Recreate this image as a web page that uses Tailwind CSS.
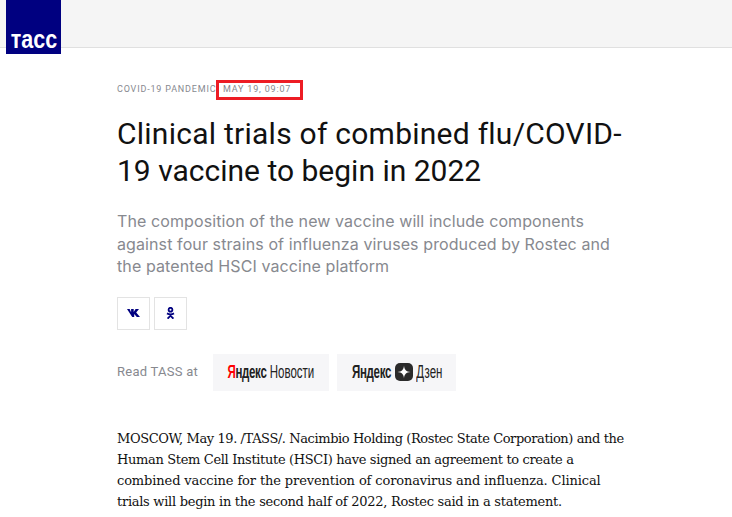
<!DOCTYPE html>
<html lang="en">
<head>
  <meta charset="UTF-8" />
  <title>TASS</title>
  <script src="https://cdn.jsdelivr.net/npm/@tailwindcss/browser@4"></script>
</head>
<body class="h-[517px] w-[732px] overflow-hidden bg-white font-['Roboto',sans-serif]">
  <!-- header -->
  <header class="relative h-[48px] bg-[#f5f5f5] border-b border-[#e0e0e0]">
    <div class="absolute left-[6px] top-0 w-[55px] h-[54px] bg-[#000080] flex items-end justify-center pb-[2px]">
      <span class="text-white font-bold text-[25px] leading-[26px] scale-x-[0.86] font-['Liberation_Sans',sans-serif]">тасс</span>
    </div>
  </header>

  <main class="pl-[117px] w-[660px]">
    <!-- meta -->
    <div class="flex items-center mt-[32px] h-[20px] text-[9px] tracking-[0.82px] text-[#87898f]">
      <span class="whitespace-nowrap w-[99px]">COVID-19 PANDEMIC</span>
      <span class="h-[20px] w-[87px] border-[3px] border-[#ed1c24] flex items-center pl-[4px] whitespace-nowrap">MAY 19, 09:07</span>
    </div>

    <h1 class="mt-[15px] text-[30px] leading-[37px] tracking-[0.25px] text-[#111] font-normal whitespace-nowrap">Clinical trials of combined flu/COVID-<br><span class="tracking-[0px]">19 vaccine to begin in 2022</span></h1>

    <p class="mt-[21px] text-[16px] leading-[22.5px] tracking-[0.1px] text-[#87898f] font-['Inter',sans-serif] whitespace-nowrap">The composition of the new vaccine will include components<br>against four strains of influenza viruses produced by Rostec and<br>the patented HSCI vaccine platform</p>

    <!-- social -->
    <div class="flex gap-[4px] mt-[19px]">
      <a class="w-[33px] h-[33px] border border-[#e3e3e3] flex items-center justify-center">
        <svg width="13" height="8" viewBox="0 0 13 8"><path d="M0 0h2.600l1.500 3.200V0h2.600v3L8.600 0H12L9.200 3.600 13 8H9.800L7.200 4.900V8H5.200L0 0z" fill="#000080"/></svg>
      </a>
      <a class="w-[33px] h-[33px] border border-[#e3e3e3] flex items-center justify-center">
        <svg width="9" height="12" viewBox="0 0 9 12" fill="none" stroke="#000080" stroke-width="1.800"><circle cx="4.500" cy="2.700" r="1.900"/><path d="M1 6.400c2.200 1.200 4.800 1.200 7 0M4.500 7.500v1.300M1.600 11.700l2.900-3 2.900 3"/></svg>
      </a>
    </div>

    <!-- read at -->
    <div class="flex items-center mt-[24px]">
      <span class="text-[13px] tracking-[0.25px] text-[#87898f] w-[96px] whitespace-nowrap">Read TASS at</span>
      <a class="w-[116px] h-[37px] bg-[#f6f6f8] flex items-center justify-center font-['Liberation_Sans',sans-serif] text-[18px] text-[#222]">
        <span class="scale-x-[0.64] whitespace-nowrap"><b class="tracking-[-0.5px]"><span class="text-[#ff0000]">Я</span>ндекс</b><span class="ml-[5px]">Новости</span></span>
      </a>
      <a class="ml-[8px] w-[119px] h-[37px] bg-[#f6f6f8] flex items-center justify-center font-['Liberation_Sans',sans-serif] text-[18px] text-[#222]">
        <b class="scale-x-[0.64] -mx-[11px] tracking-[-0.5px]">Яндекс</b>
        <svg class="mx-[4px] shrink-0" width="18" height="18" viewBox="0 0 18 18"><rect width="18" height="18" rx="5" fill="#2b2b2b"/><path d="M9 2.500c.3 4.300 2.200 6.200 6.500 6.500-4.300.3-6.200 2.200-6.500 6.500-.3-4.300-2.200-6.200-6.500-6.500 4.300-.3 6.200-2.200 6.500-6.500z" fill="#fff"/></svg>
        <span class="scale-x-[0.64] -mx-[8px]">Дзен</span>
      </a>
    </div>

    <!-- article -->
    <p class="mt-[37px] font-['DejaVu_Serif',serif] text-[13px] leading-[21px] tracking-[-0.34px] text-[#111] whitespace-nowrap"><span class="tracking-[-0.41px]">MOSCOW, May 19. /TASS/. Nacimbio Holding (Rostec State Corporation) and the</span><br>Human Stem Cell Institute (HSCI) have signed an agreement to create a<br><span class="tracking-[-0.12px]">combined vaccine for the prevention of coronavirus and influenza. Clinical</span><br><span class="tracking-[-0.28px]">trials will begin in the second half of 2022, Rostec said in a statement.</span></p>
  </main>
</body>
</html>
